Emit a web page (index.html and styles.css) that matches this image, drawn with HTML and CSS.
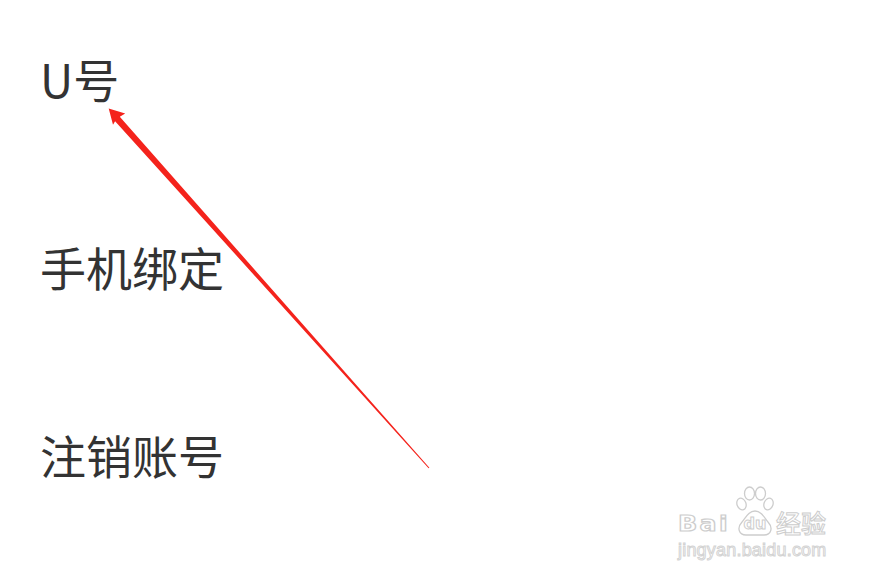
FILE: index.html
```html
<!DOCTYPE html>
<html lang="zh-CN">
<head>
<meta charset="utf-8">
<title>账号设置</title>
<link rel="stylesheet" href="styles.css">
</head>
<body>
<div class="page">
  <ul class="list">
    <li class="item">U号</li>
    <li class="item">手机绑定</li>
    <li class="item">注销账号</li>
  </ul>

  <svg class="arrow" width="882" height="584" viewBox="0 0 882 584" aria-hidden="true">
    <polygon fill="#f4231c" points="108.7,108.5 125.2,113.6 119.8,116.8 429.4,467.7 428.6,468.3 115.1,121.2 113,124.8"/>
  </svg>

  <div class="watermark" aria-label="Baidu 经验 jingyan.baidu.com">
    <div class="wm-top">
      <span class="wm-bai">Bai</span>
      <span class="wm-paw">
        <svg width="38" height="50" viewBox="0 0 38 50">
          <g fill="#fff" stroke="#cdcdcd" stroke-width="1.3">
            <ellipse cx="5.5" cy="18" rx="4.5" ry="6" transform="rotate(-20 5.5 18)"/>
            <ellipse cx="13.5" cy="7.5" rx="5" ry="6.5"/>
            <ellipse cx="24.5" cy="7.5" rx="5" ry="6.5"/>
            <ellipse cx="32.5" cy="18" rx="4.5" ry="6" transform="rotate(20 32.5 18)"/>
            <path d="M19 25 C13 25 10 31 6 36 C0.5 42 3 49 10 49 L28 49 C35 49 37.5 42 32 36 C28 31 25 25 19 25 Z"/>
          </g>
        </svg>
        <span class="wm-du">du</span>
      </span>
      <span class="wm-jy">经验</span>
    </div>
    <div class="wm-url">jingyan.baidu.com</div>
  </div>
</div>
</body>
</html>
```

FILE: styles.css
```css
html, body {
  margin: 0;
  padding: 0;
  background: #ffffff;
}

.page {
  position: relative;
  width: 882px;
  height: 584px;
  overflow: hidden;
  background: #ffffff;
}

.list {
  list-style: none;
  margin: 0;
  padding: 50px 0 0 40px;
  display: flex;
  flex-direction: column;
  gap: 132px;
}

.item {
  height: 56px;
  line-height: 56px;
  font-family: "Noto Sans CJK SC", "Noto Sans", sans-serif;
  font-size: 46px;
  font-weight: 400;
  color: #333333;
}

.arrow {
  position: absolute;
  left: 0;
  top: 0;
  pointer-events: none;
}

.watermark {
  position: absolute;
  left: 678px;
  top: 484px;
  width: 160px;
  pointer-events: none;
}

.wm-top {
  display: flex;
  align-items: flex-end;
  height: 52px;
}

.wm-bai {
  font-family: "DejaVu Sans", "Liberation Sans", sans-serif;
  font-weight: 700;
  font-size: 22px;
  line-height: 22px;
  letter-spacing: 2px;
  color: #ffffff;
  -webkit-text-stroke: 1.2px #cdcdcd;
  transform: scaleX(1.15);
  transform-origin: left bottom;
  width: 58px;
  margin-bottom: 1px;
}

.wm-paw {
  position: relative;
  width: 38px;
  height: 50px;
  margin-left: 0;
}

.wm-paw svg {
  display: block;
}

.wm-du {
  position: absolute;
  left: 0;
  right: 0;
  bottom: 4px;
  text-align: center;
  font-family: "DejaVu Sans", "Liberation Sans", sans-serif;
  font-weight: 700;
  font-size: 16px;
  line-height: 16px;
  color: #ffffff;
  -webkit-text-stroke: 1px #cdcdcd;
}

.wm-jy {
  font-family: "Noto Sans CJK SC", sans-serif;
  font-weight: 500;
  font-size: 25px;
  line-height: 26px;
  color: #ffffff;
  -webkit-text-stroke: 1px #cdcdcd;
  margin-left: 2px;
  margin-bottom: 1px;
}

.wm-url {
  margin-top: 4px;
  font-family: "Liberation Sans", Arial, sans-serif;
  font-size: 18px;
  line-height: 20px;
  color: #ffffff;
  -webkit-text-stroke: 1px #d3d3d3;
  letter-spacing: 0.2px;
}
```
